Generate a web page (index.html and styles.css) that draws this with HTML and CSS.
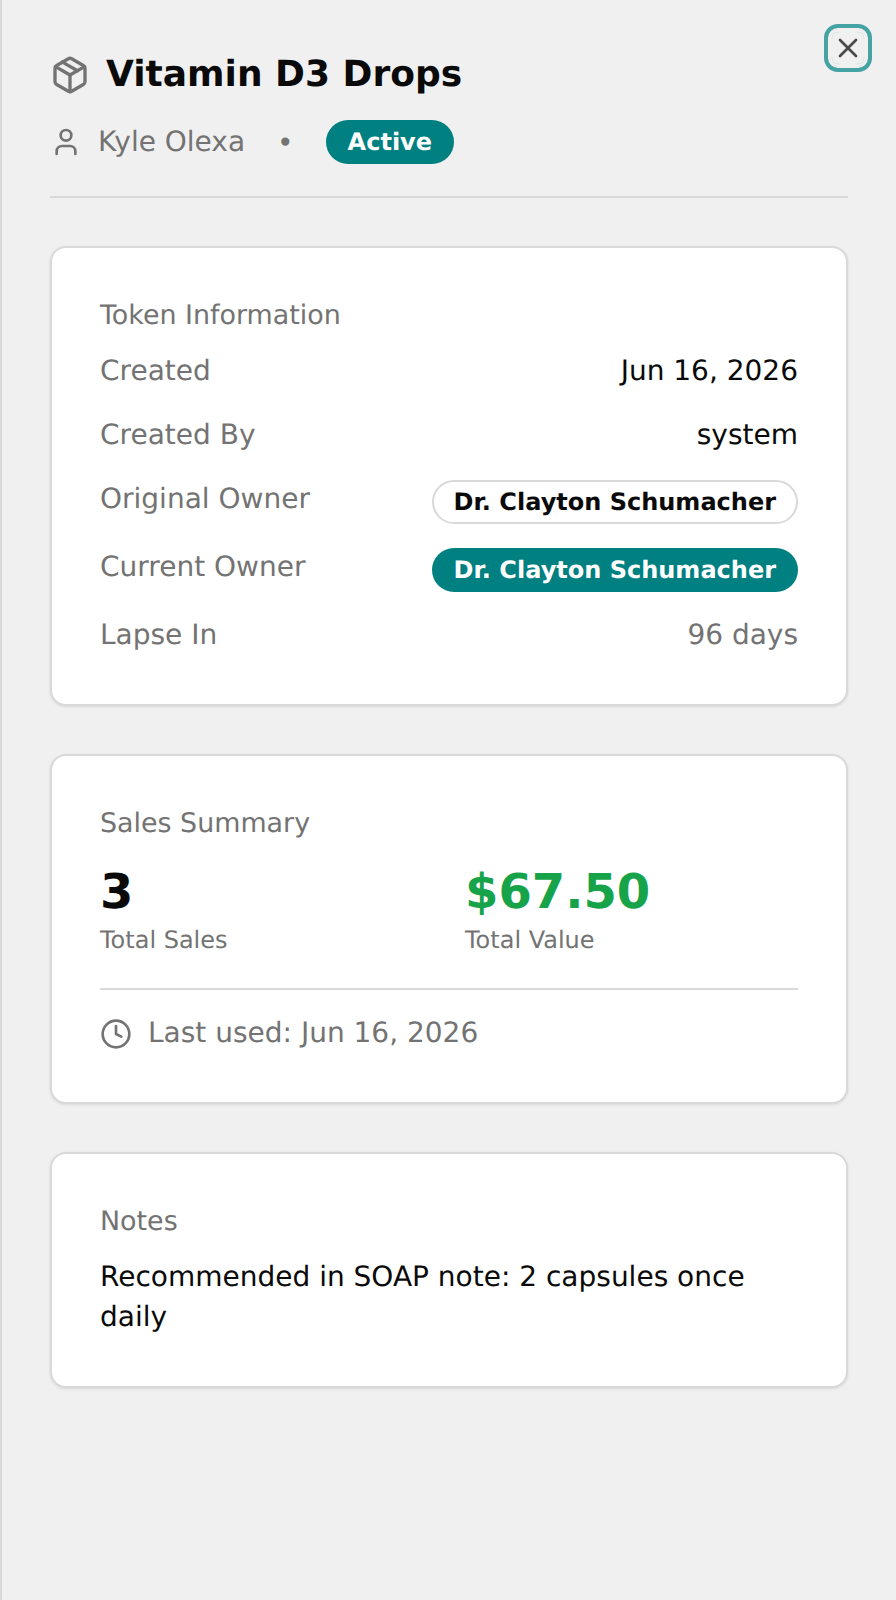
FILE: index.html
```html
<!DOCTYPE html>
<html lang="en">
<head>
<meta charset="utf-8">
<title>Vitamin D3 Drops</title>
<link rel="stylesheet" href="styles.css">
</head>
<body>
<aside class="sheet">
  <button class="close" aria-label="Close">
    <svg viewBox="0 0 40 40" width="40" height="40" class="close-icon">
      <path class="close-arcs" d="M4 11Q4 4 11 4M29 4Q36 4 36 11M36 29Q36 36 29 36M11 36Q4 36 4 29"/>
      <path class="close-x" d="M12 12l16 16M28 12L12 28"/>
    </svg>
  </button>
  <header class="head">
    <h1 class="title">
      <svg viewBox="0 0 24 24" width="40" height="40" class="stroke icon-muted"><path d="M21 8a2 2 0 0 0-1-1.73l-7-4a2 2 0 0 0-2 0l-7 4A2 2 0 0 0 3 8v8a2 2 0 0 0 1 1.73l7 4a2 2 0 0 0 2 0l7-4A2 2 0 0 0 21 16Z"/><path d="M12 22V12"/><path d="M3.29 7 12 12l8.71-5"/><path d="m7.5 4.27 9 5.15"/></svg>
      <span>Vitamin D3 Drops</span>
    </h1>
    <div class="meta">
      <svg viewBox="0 0 24 24" width="32" height="32" class="stroke icon-muted"><path d="M19 21v-2a4 4 0 0 0-4-4H9a4 4 0 0 0-4 4v2"/><circle cx="12" cy="7" r="4"/></svg>
      <span class="owner">Kyle Olexa</span>
      <span class="dot">•</span>
      <span class="pill pill-solid">Active</span>
    </div>
  </header>

  <section class="card">
    <h2 class="card-title">Token Information</h2>
    <div class="row"><span class="label">Created</span><span class="value">Jun 16, 2026</span></div>
    <div class="row"><span class="label">Created By</span><span class="value">system</span></div>
    <div class="row"><span class="label">Original Owner</span><span class="pill pill-outline">Dr. Clayton Schumacher</span></div>
    <div class="row"><span class="label">Current Owner</span><span class="pill pill-solid">Dr. Clayton Schumacher</span></div>
    <div class="row"><span class="label">Lapse In</span><span class="value muted">96 days</span></div>
  </section>

  <section class="card">
    <h2 class="card-title">Sales Summary</h2>
    <div class="stats">
      <div class="stat"><div class="num">3</div><div class="cap">Total Sales</div></div>
      <div class="stat"><div class="num green">$67.50</div><div class="cap">Total Value</div></div>
    </div>
    <div class="used">
      <svg viewBox="0 0 24 24" width="32" height="32" class="stroke icon-dark"><circle cx="12" cy="12" r="10"/><path d="M12 6v6l4 2"/></svg>
      <span class="used-text">Last used: Jun 16, 2026</span>
    </div>
  </section>

  <section class="card">
    <h2 class="card-title">Notes</h2>
    <p class="note">Recommended in SOAP note: 2 capsules once daily</p>
  </section>
</aside>
</body>
</html>
```

FILE: styles.css
```css
* { box-sizing: border-box; }
html, body { margin: 0; height: 100%; }
body { background: #f0f0f0; font-family: "DejaVu Sans", sans-serif; color: #0a0a0a; text-rendering: geometricPrecision; }
.sheet { position: relative; min-height: 1600px; border-left: 2px solid #d9d9d9; padding: 48px 48px 0 48px; display: flex; flex-direction: column; }
.stroke { fill: none; stroke: currentColor; stroke-width: 2; stroke-linecap: round; stroke-linejoin: round; flex: none; }
.icon-muted { color: #737373; }
.icon-dark { color: #737373; }
.close { position: absolute; top: 24px; right: 24px; width: 48px; height: 48px; padding: 0; display: flex; align-items: center; justify-content: center; background: transparent; border: 4px solid #46a3a3; border-radius: 14px; }
.close-icon { display: block; flex: none; }
.close-arcs { fill: none; stroke: #d5e8e8; stroke-width: 1; }
.close-x { fill: none; stroke: #4a4a4a; stroke-width: 2.67; stroke-linecap: round; }
.head { border-bottom: 2px solid #d9d9d9; padding-bottom: 32px; margin-bottom: 48px; }
.title { display: flex; align-items: center; gap: 16px; margin: 0 0 21px; padding-top: 3px; font-size: 36px; line-height: 48px; font-weight: 700; }
.meta { display: flex; align-items: center; font-size: 28px; color: #737373; height: 44px; }
.owner { margin-left: 16px; padding-bottom: 2px; }
.dot { margin: 0 32px; font-size: 28px; }
.pill { display: inline-flex; align-items: center; height: 44px; padding: 0 22px; border-radius: 22px; font-size: 24px; font-weight: 700; white-space: nowrap; }
.pill-solid { background: #008080; color: #fff; }
.pill-outline { background: #fff; border: 2px solid #d9d9d9; padding: 0 20px; color: #0a0a0a; }
.card { background: #fff; border: 2px solid #d9d9d9; border-radius: 16px; padding: 48px; margin-bottom: 48px; box-shadow: 0 1px 3px rgba(0,0,0,.1); }
.card-title { margin: 0 0 16px; font-size: 26.9px; line-height: 40px; font-weight: 400; color: #737373; }
.row { display: flex; justify-content: space-between; align-items: flex-start; font-size: 28px; line-height: 40px; margin-top: 24px; }
.row:first-of-type { margin-top: 0; }
.label, .value { line-height: 38px; padding-bottom: 2px; }
.label { color: #737373; }
.muted { color: #737373; }
.stats { display: grid; grid-template-columns: 1fr 1fr; column-gap: 32px; padding-bottom: 32px; border-bottom: 2px solid #d9d9d9; }
.num { font-size: 48px; line-height: 63px; padding-top: 1px; font-weight: 700; }
.green { color: #16a34a; }
.cap { font-size: 24px; line-height: 32px; color: #737373; }
.used { display: flex; align-items: center; gap: 16px; margin-top: 24px; font-size: 28px; line-height: 40px; color: #737373; }
.used-text { line-height: 38px; padding-bottom: 2px; }
.note { margin: -1px 0 1px; font-size: 28px; line-height: 40px; }
```
